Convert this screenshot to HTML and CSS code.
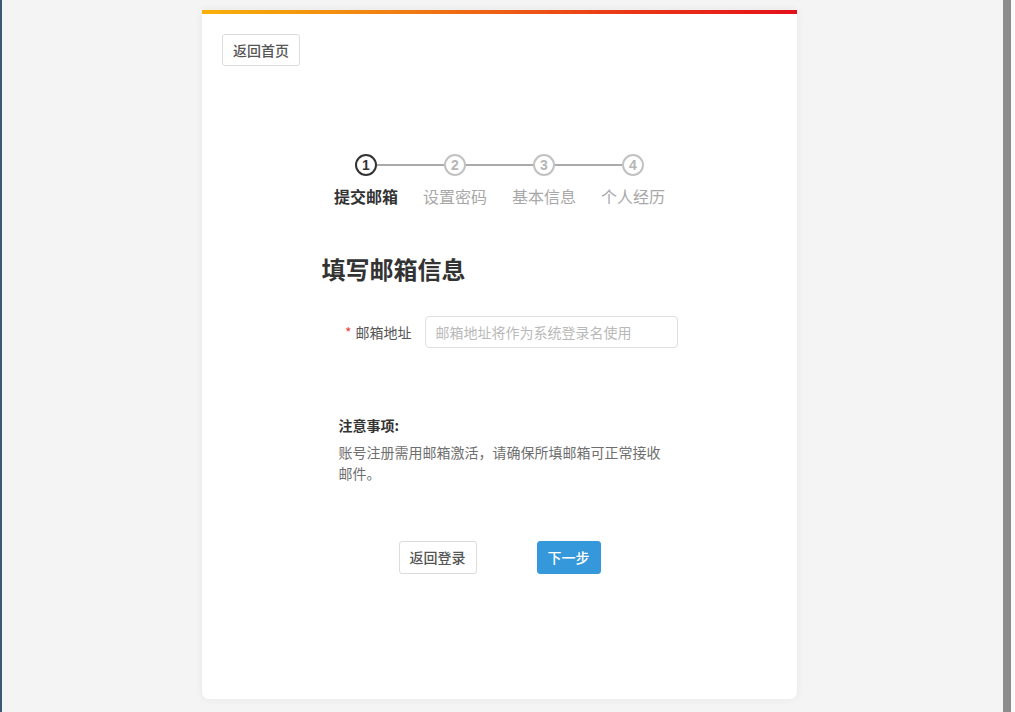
FILE: index.html
```html
<!DOCTYPE html>
<html lang="zh-CN">
<head>
<meta charset="utf-8">
<title>填写邮箱信息</title>
<link rel="stylesheet" href="styles.css">
</head>
<body>
<div class="page">
  <main class="main">
    <section class="card">
      <div class="card-bar"></div>
      <div class="card-body">
        <div class="top-row">
          <button class="btn btn-default">返回首页</button>
        </div>
        <div class="steps">
          <div class="step-dots">
            <span class="dot dot-active">1</span>
            <span class="line"></span>
            <span class="dot">2</span>
            <span class="line"></span>
            <span class="dot">3</span>
            <span class="line"></span>
            <span class="dot">4</span>
          </div>
          <div class="step-labels">
            <span class="label label-active">提交邮箱</span>
            <span class="label">设置密码</span>
            <span class="label">基本信息</span>
            <span class="label">个人经历</span>
          </div>
        </div>
        <div class="content">
          <h1 class="title">填写邮箱信息</h1>
          <div class="form-row">
            <label class="form-label"><span class="req">*</span>邮箱地址</label>
            <input class="form-input" type="text" placeholder="邮箱地址将作为系统登录名使用">
          </div>
          <div class="notes">
            <div class="notes-title">注意事项:</div>
            <p class="notes-text">账号注册需用邮箱激活，请确保所填邮箱可正常接收邮件。</p>
          </div>
          <div class="actions">
            <button class="btn btn-default">返回登录</button>
            <button class="btn btn-primary">下一步</button>
          </div>
        </div>
      </div>
    </section>
  </main>
  <div class="scroll-strip"></div>
  <div class="edge-strip"></div>
</div>
</body>
</html>
```

FILE: styles.css
```css
* { box-sizing: border-box; }
html, body { margin: 0; padding: 0; height: 100%; }
body {
  font-family: "Noto Sans CJK SC", "Noto Sans", "Liberation Sans", sans-serif;
  background: #f4f4f4;
  color: #333;
  overflow: hidden;
}
.page {
  display: flex;
  height: 712px;
  border-left: 2px solid #3d5877;
}
.main {
  flex: 1;
  padding: 10px 0 0 200px;
}
.scroll-strip { width: 8px; background: #8c8c8c; }
.edge-strip { width: 4px; background: #fafafa; }

.card {
  width: 595px;
  height: 689px;
  background: #fff;
  border-radius: 0 0 7px 7px;
  box-shadow: 0 0 8px rgba(0,0,0,0.06);
  overflow: hidden;
}
.card-bar {
  height: 4px;
  background: linear-gradient(90deg, #f8b10a 0%, #f07a12 35%, #ea3a16 70%, #e5101a 100%);
}
.card-body { padding: 20px 20px 0 20px; }

.btn {
  font-family: inherit;
  font-size: 14px;
  font-weight: 500;
  height: 33px;
  padding: 0 10px;
  border-radius: 3px;
  cursor: pointer;
  line-height: 31px;
}
.btn-default {
  background: #fff;
  color: #555;
  border: 1px solid #dcdcdc;
  width: 78px;
}
.btn-primary {
  background: #3498db;
  color: #fff;
  border: 1px solid #3498db;
  width: 64px;
}
.top-row { display: flex; }
.top-row .btn { height: 32px; line-height: 30px; }

.steps {
  width: 356px;
  margin: 88px auto 0;
}
.step-dots {
  display: flex;
  align-items: center;
  padding: 0 33.5px;
}
.dot {
  width: 22px;
  height: 22px;
  border-radius: 50%;
  border: 2px solid #c2c2c2;
  color: #b5b5b5;
  font-family: "Liberation Sans", Arial, sans-serif;
  font-size: 14px;
  font-weight: 700;
  display: flex;
  align-items: center;
  justify-content: center;
  line-height: 1;
  flex: none;
}
.dot-active { border-color: #333; color: #333; }
.line {
  flex: 1;
  height: 2px;
  background: #aaa;
}
.step-labels {
  display: flex;
  margin-top: 10px;
}
.label {
  width: 89px;
  text-align: center;
  font-size: 16px;
  line-height: 20px;
  color: #a8a8a8;
}
.label-active { color: #333; font-weight: 700; }

.content {
  width: 356px;
  margin: 0 auto;
}
.title {
  margin: 48px 0 0;
  font-size: 24px;
  line-height: 30px;
  font-weight: 700;
  color: #333;
}
.form-row {
  display: flex;
  align-items: center;
  margin-top: 32px;
  gap: 13px;
}
.form-label {
  width: 90px;
  text-align: right;
  font-size: 14px;
  color: #555;
}
.req { color: #e8463a; margin-right: 4px; }
.form-input {
  width: 253px;
  height: 32px;
  border: 1px solid #dfdfdf;
  border-radius: 4px;
  padding: 0 10px;
  font-family: inherit;
  font-size: 14px;
  color: #333;
  outline: none;
}
.form-input::placeholder { color: #b9b9b9; }

.notes {
  margin-top: 67px;
  padding: 0 17px;
}
.notes-title {
  font-size: 14px;
  font-weight: 700;
  line-height: 20px;
  color: #333;
}
.notes-text {
  margin: 7px 0 0;
  font-size: 14px;
  line-height: 21px;
  color: #6e6e6e;
  width: 326px;
}
.actions {
  display: flex;
  justify-content: center;
  gap: 60px;
  margin-top: 57px;
}
```
